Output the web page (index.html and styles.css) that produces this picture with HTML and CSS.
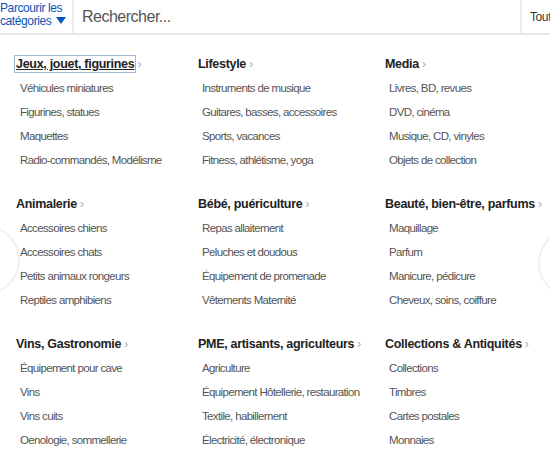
FILE: index.html
```html
<!DOCTYPE html>
<html lang="fr">
<head>
<meta charset="utf-8">
<link rel="stylesheet" href="styles.css">
</head>
<body>
<div class="page">
  <header class="top">
    <button class="browse">Parcourir les<br>catégories <span class="tri"></span></button>
    <div class="search">Rechercher...</div>
    <div class="scope">Toutes</div>
  </header>
  <div class="ghost ghost-left"></div>
  <div class="ghost ghost-right"></div>
  <main class="grid">
    <section class="cat">
      <h3><a class="focus" href="#">Jeux, jouet, figurines</a><span class="chev">›</span></h3>
      <ul><li>Véhicules miniatures</li><li>Figurines, statues</li><li>Maquettes</li><li>Radio-commandés, Modélisme</li></ul>
    </section>
    <section class="cat">
      <h3><a href="#">Lifestyle</a><span class="chev">›</span></h3>
      <ul><li>Instruments de musique</li><li>Guitares, basses, accessoires</li><li>Sports, vacances</li><li>Fitness, athlétisme, yoga</li></ul>
    </section>
    <section class="cat">
      <h3><a href="#">Media</a><span class="chev">›</span></h3>
      <ul><li>Livres, BD, revues</li><li>DVD, cinéma</li><li>Musique, CD, vinyles</li><li>Objets de collection</li></ul>
    </section>
    <section class="cat">
      <h3><a href="#">Animalerie</a><span class="chev">›</span></h3>
      <ul><li>Accessoires chiens</li><li>Accessoires chats</li><li>Petits animaux rongeurs</li><li>Reptiles amphibiens</li></ul>
    </section>
    <section class="cat">
      <h3><a href="#">Bébé, puériculture</a><span class="chev">›</span></h3>
      <ul><li>Repas allaitement</li><li>Peluches et doudous</li><li>Équipement de promenade</li><li>Vêtements Maternité</li></ul>
    </section>
    <section class="cat">
      <h3><a href="#">Beauté, bien-être, parfums</a><span class="chev">›</span></h3>
      <ul><li>Maquillage</li><li>Parfum</li><li>Manicure, pédicure</li><li>Cheveux, soins, coiffure</li></ul>
    </section>
    <section class="cat">
      <h3><a href="#">Vins, Gastronomie</a><span class="chev">›</span></h3>
      <ul><li>Équipement pour cave</li><li>Vins</li><li>Vins cuits</li><li>Oenologie, sommellerie</li></ul>
    </section>
    <section class="cat">
      <h3><a href="#">PME, artisants, agriculteurs</a><span class="chev">›</span></h3>
      <ul><li>Agriculture</li><li>Équipement Hôtellerie, restauration</li><li>Textile, habillement</li><li>Électricité, électronique</li></ul>
    </section>
    <section class="cat">
      <h3><a href="#">Collections &amp; Antiquités</a><span class="chev">›</span></h3>
      <ul><li>Collections</li><li>Timbres</li><li>Cartes postales</li><li>Monnaies</li></ul>
    </section>
  </main>
</div>
</body>
</html>
```
FILE: styles.css
```css
* { box-sizing: border-box; }
html, body { margin: 0; padding: 0; background: #fff; }
body { font-family: "Liberation Sans", Arial, sans-serif; width: 550px; height: 468px; overflow: hidden; }
.page { position: relative; width: 550px; height: 468px; }

.top {
  display: flex;
  height: 35px;
  border-bottom: 2px solid #e6e6e6;
}
.browse {
  width: 74px;
  flex: none;
  margin: 0;
  border: 0;
  border-right: 2px solid #ececec;
  background: #fff;
  font-family: inherit;
  font-size: 12px;
  line-height: 13px;
  color: #0654ba;
  text-align: left;
  letter-spacing: -0.4px;
  padding: 0 0 4px 0;
}
.tri {
  display: inline-block;
  width: 0;
  height: 0;
  margin-left: 2px;
  border-left: 5px solid transparent;
  border-right: 5px solid transparent;
  border-top: 7px solid #0654ba;
  vertical-align: 1px;
}
.search {
  flex: 1;
  display: flex;
  align-items: center;
  padding-left: 8px;
  font-size: 16px;
  color: #555;
  letter-spacing: -0.5px;
}
.scope {
  width: 30px;
  flex: none;
  border-left: 2px solid #ececec;
  display: flex;
  align-items: center;
  padding-left: 8px;
  font-size: 12px;
  color: #333;
  letter-spacing: -0.4px;
  white-space: nowrap;
  overflow: hidden;
}

.ghost {
  position: absolute;
  width: 70px;
  height: 70px;
  border-radius: 50%;
  border: 2px solid #f1f1f1;
  top: 225px;
}
.ghost-left { left: -50px; }
.ghost-right { left: 538px; top: 228px; }

.grid {
  position: relative;
  display: grid;
  grid-template-columns: 182px 187px 1fr;
  row-gap: 20px;
  padding: 17px 0 0 16px;
}
.cat h3 {
  margin: 0;
  height: 24px;
  font-size: 12.5px;
  line-height: 24px;
  font-weight: bold;
  color: #222;
  letter-spacing: -0.3px;
  white-space: nowrap;
}
.cat h3 a { color: #222; text-decoration: none; }
.cat h3 a.focus {
  text-decoration: underline;
  outline: 1px solid #9fb6d6;
  outline-offset: 1px;
}
.chev { color: #aaa; font-weight: normal; margin-left: 3px; font-size: 12px; }
.cat ul { list-style: none; margin: 0; padding: 0 0 0 4px; }
.cat li {
  height: 24px;
  line-height: 24px;
  font-size: 11.5px;
  color: #555;
  letter-spacing: -0.65px;
  white-space: nowrap;
}
```
